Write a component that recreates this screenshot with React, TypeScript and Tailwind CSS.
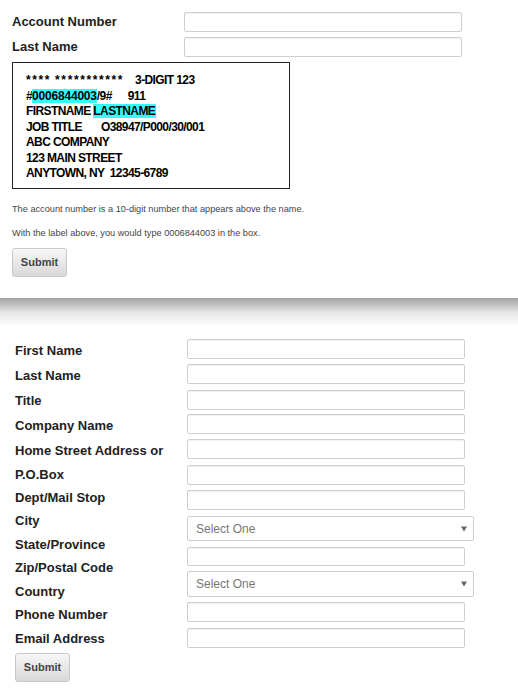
import React from "react";

const font = { fontFamily: '"Liberation Sans", Arial, sans-serif' };

function TextInput({ cls }: { cls: string }) {
  return (
    <div
      className={`w-[278px] rounded-[2px] border border-[#cfcfcf] bg-white shadow-[inset_0_1px_1px_rgba(0,0,0,0.06)] ${cls}`}
    />
  );
}

function SelectBox({ cls }: { cls: string }) {
  return (
    <div
      className={`relative flex w-[287px] items-center rounded-[2px] border border-[#cfcfcf] bg-white pl-[8px] text-[12px] text-[#777] ${cls}`}
    >
      Select One
      <span className="absolute right-[6px] top-1/2 h-0 w-0 -translate-y-1/2 border-x-[3px] border-t-[5px] border-x-transparent border-t-[#666]" />
    </div>
  );
}

function SubmitButton({ cls }: { cls: string }) {
  return (
    <div
      className={`flex h-[29px] w-[55px] items-center justify-center rounded-[3px] border border-[#c8c8c8] bg-gradient-to-b from-[#f7f7f7] to-[#d9d9d9] text-[11px] font-bold text-[#444] ${cls}`}
    >
      Submit
    </div>
  );
}

const labels: [string, string][] = [
  ["First Name", "h-[24px]"],
  ["Last Name", "h-[26px]"],
  ["Title", "h-[24px]"],
  ["Company Name", "h-[25px]"],
  ["Home Street Address or", "h-[25px]"],
  ["P.O.Box", "h-[23px]"],
  ["Dept/Mail Stop", "h-[23px]"],
  ["City", "h-[24px]"],
  ["State/Province", "h-[23px]"],
  ["Zip/Postal Code", "h-[24px]"],
  ["Country", "h-[23px]"],
  ["Phone Number", "h-[24px]"],
  ["Email Address", "h-[24px]"],
];

export default function App() {
  return (
    <div className="min-h-[697px] w-[518px] bg-white text-[#222]" style={font}>
      {/* Top section */}
      <div className="px-[12px] pt-[12px]">
        <div className="flex h-[20px] items-center">
          <div className="w-[172px] text-[13px] font-bold">Account Number</div>
          <TextInput cls="h-[20px]" />
        </div>
        <div className="mt-[5px] flex h-[20px] items-center">
          <div className="w-[172px] text-[13px] font-bold">Last Name</div>
          <TextInput cls="h-[20px]" />
        </div>
        <div className="mt-[5px] h-[127px] w-[278px] border border-[#222] pl-[13px] pt-[10px] text-[12px] font-bold leading-[15.5px] tracking-[-0.6px] text-black">
          <div>
            <span className="tracking-[1.6px]">****</span>
            <span className="ml-[4px] tracking-[1.6px]">***********</span>
            <span className="ml-[11px]">3-DIGIT 123</span>
          </div>
          <div>
            #<span className="bg-[#33ffff] tracking-[-0.2px]">0006844003</span>/9#
            <span className="ml-[16px]">911</span>
          </div>
          <div>
            FIRSTNAME <span className="bg-[#33ffff] pr-[1px]">LASTNAME</span>
          </div>
          <div>
            JOB TITLE<span className="ml-[19px]">O38947/P000/30/001</span>
          </div>
          <div>ABC COMPANY</div>
          <div>123 MAIN STREET</div>
          <div className="whitespace-pre">ANYTOWN, NY  12345-6789</div>
        </div>
        <p className="mt-[14px] text-[9.2px] leading-[12px] text-[#444]">
          The account number is a 10-digit number that appears above the name.
        </p>
        <p className="mt-[12px] text-[9.2px] leading-[12px] text-[#444]">
          With the label above, you would type 0006844003 in the box.
        </p>
        <SubmitButton cls="mt-[9px]" />
      </div>

      {/* Divider */}
      <div className="mt-[21px] h-[28px] w-full bg-gradient-to-b from-[#a3a3a3] via-[#e4e4e4] to-white" />

      {/* Bottom section */}
      <div className="flex px-[15px] pt-[13px]">
        <div className="flex w-[172px] flex-col">
          {labels.map(([t, h]) => (
            <div key={t} className={`flex items-center text-[13px] font-bold ${h}`}>
              {t}
            </div>
          ))}
          <SubmitButton cls="mt-[2px]" />
        </div>
        <div className="flex flex-col">
          <TextInput cls="h-[20px]" />
          <TextInput cls="mt-[5px] h-[20px]" />
          <TextInput cls="mt-[6px] h-[20px]" />
          <TextInput cls="mt-[4px] h-[20px]" />
          <TextInput cls="mt-[5px] h-[20px]" />
          <TextInput cls="mt-[6px] h-[20px]" />
          <TextInput cls="mt-[5px] h-[20px]" />
          <SelectBox cls="mt-[6px] h-[25px]" />
          <TextInput cls="mt-[6px] h-[19px]" />
          <SelectBox cls="mt-[5px] h-[26px]" />
          <TextInput cls="mt-[5px] h-[20px]" />
          <TextInput cls="mt-[6px] h-[20px]" />
        </div>
      </div>
    </div>
  );
}
